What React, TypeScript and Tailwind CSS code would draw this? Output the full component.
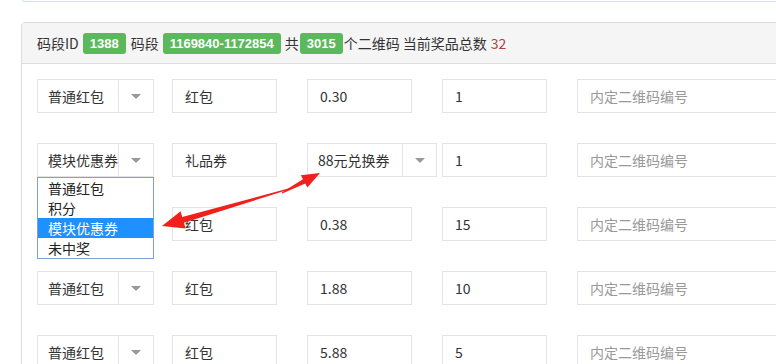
import React from "react";

const font = { fontFamily: '"Microsoft YaHei", "Noto Sans CJK SC", "Noto Sans", sans-serif' };

function Caret() {
  return (
    <span className="block h-0 w-0 border-x-[5px] border-t-[5px] border-x-transparent border-t-[#999]" />
  );
}

function SelectBox({ value, textW, caretW }: { value: string; textW: string; caretW: string }) {
  return (
    <div className="flex h-[34px] border border-[#e3e3e3] bg-white">
      <div className={`${textW} flex items-center pl-[10px] text-[14px] text-[#333] whitespace-nowrap`}>
        {value}
      </div>
      <div className={`${caretW} flex items-center justify-center border-l border-[#e3e3e3]`}>
        <Caret />
      </div>
    </div>
  );
}

function Field({ value, placeholder, w = "w-[105px]" }: { value?: string; placeholder?: string; w?: string }) {
  return (
    <div
      className={`${w} flex h-[34px] items-center border border-[#e3e3e3] bg-white pl-[12px] text-[14px] whitespace-nowrap ${
        value ? "text-[#333]" : "text-[#999]"
      }`}
    >
      {value || placeholder}
    </div>
  );
}

function Badge({ children }: { children: React.ReactNode }) {
  return (
    <span className="inline-flex h-[21px] items-center rounded-[3px] bg-[#5cb85c] px-[7px] font-['Liberation_Sans',Arial,sans-serif] text-[13px] font-bold text-white">
      {children}
    </span>
  );
}

const rows = [
  { type: "普通红包", name: "红包", price: "0.30", count: "1" },
  { type: "模块优惠券", name: "礼品券", price: "88元兑换券", count: "1", coupon: true },
  { type: "普通红包", name: "红包", price: "0.38", count: "15" },
  { type: "普通红包", name: "红包", price: "1.88", count: "10" },
  { type: "普通红包", name: "红包", price: "5.88", count: "5" },
];

export default function App() {
  return (
    <div className="relative h-[364px] w-[776px] overflow-hidden bg-white" style={font}>
      <div className="mx-[22px] mr-[-10px] h-[2px] rounded-b-[4px] border-x border-b border-[#c6e4f0]" />

      <div className="ml-[21px] mr-[-30px] mt-[20px] rounded-tl-[4px] border-l border-t border-[#dddddd]">
        <div className="flex h-[41px] items-center border-b border-[#dddddd] bg-[#f5f5f5] pl-[15px] text-[14px] text-[#333] whitespace-nowrap">
          <span>码段ID</span>
          <span className="ml-[4px]">
            <Badge>1388</Badge>
          </span>
          <span className="ml-[5px]">码段</span>
          <span className="ml-[4px]">
            <Badge>1169840-1172854</Badge>
          </span>
          <span className="ml-[4px]">共</span>
          <span className="ml-[1px]">
            <Badge>3015</Badge>
          </span>
          <span className="ml-[1px]">个二维码 当前奖品总数</span>
          <span className="ml-[4px] text-[#a94442]">32</span>
        </div>

        <div className="flex flex-col gap-[30px] pl-[15px] pt-[15px]">
          {rows.map((r, i) => (
            <div key={i} className="relative flex items-center">
              <div className="w-[117px]">
                <SelectBox value={r.type} textW="w-[80px]" caretW="w-[35px]" />
              </div>
              <div className="ml-[18px]">
                <Field value={r.name} />
              </div>
              <div className="ml-[30px]">
                {r.coupon ? (
                  <div className="w-[130px]">
                    <SelectBox value={r.price} textW="w-[94px]" caretW="w-[34px]" />
                  </div>
                ) : (
                  <Field value={r.price} />
                )}
              </div>
              <div className={r.coupon ? "ml-[5px]" : "ml-[30px]"}>
                <Field value={r.count} />
              </div>
              <div className="ml-[30px]">
                <Field placeholder="内定二维码编号" w="w-[240px]" />
              </div>

              {r.coupon && (
                <ul className="absolute left-0 top-[34px] z-10 w-[117px] border border-[#7f9fd6] bg-white text-[14px] text-[#222]">
                  <li className="h-[20px] pl-[10px] leading-[20px]">普通红包</li>
                  <li className="h-[20px] pl-[10px] leading-[20px]">积分</li>
                  <li className="h-[20px] bg-[#1e90ff] pl-[10px] leading-[20px] text-white">模块优惠券</li>
                  <li className="h-[20px] pl-[10px] leading-[20px]">未中奖</li>
                </ul>
              )}
            </div>
          ))}
        </div>
      </div>

      <svg className="pointer-events-none absolute left-0 top-0 z-20" width="776" height="364">
        <polygon
          fill="#f0211d"
          points="292.14,188.48 183.94,222.68 185.63,228.44 162,226 180.57,211.16 182.26,216.92 291.86,187.52"
        />
        <polygon
          fill="#f0211d"
          points="282.23,193.44 305.27,183.61 307.36,187.6 320,173 300.84,175.2 302.94,179.19 281.77,192.56"
        />
      </svg>
    </div>
  );
}
